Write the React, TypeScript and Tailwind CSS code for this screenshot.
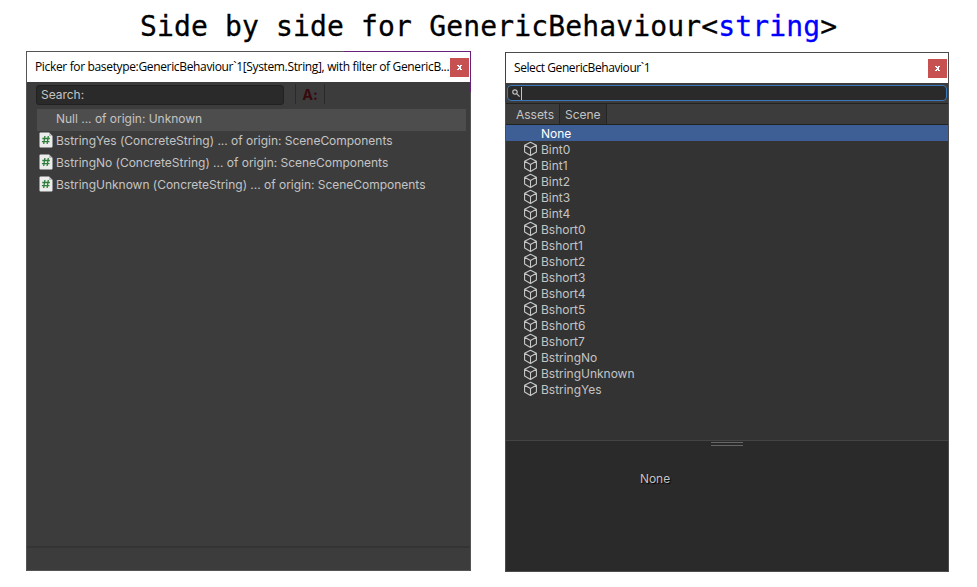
import React from "react";

const candidates = ["BstringYes", "BstringNo", "BstringUnknown"];
const sceneObjects = [
  "Bint0", "Bint1", "Bint2", "Bint3", "Bint4",
  "Bshort0", "Bshort1", "Bshort2", "Bshort3", "Bshort4", "Bshort5", "Bshort6", "Bshort7",
  "BstringNo", "BstringUnknown", "BstringYes",
];

function CloseButton() {
  return (
    <button className="flex h-[19px] w-[19px] shrink-0 items-center justify-center bg-[#c75050]" aria-label="Close">
      <svg width="5" height="5" viewBox="0 0 5 5" shapeRendering="crispEdges" fill="#fff">
        <path d="M0 0h2v1H0zM3 0h2v1H3zM1 1h3v1H1zM1.5 2h2v1h-2zM1 3h3v1H1zM0 4h2v1H0zM3 4h2v1H3z" />
      </svg>
    </button>
  );
}

function ScriptIcon() {
  return (
    <svg width="14" height="16" viewBox="0 0 14 16" className="shrink-0">
      <path d="M1.5.5H10L13.5 4v10.5q0 1-1 1h-11q-1 0-1-1v-13q0-1 1-1z" fill="#ececec" />
      <path d="M10 .5V4h3.500z" fill="#bdbdbd" />
      <path d="M5.900 4 4.700 12M9.300 4 8.100 12M3.300 6.500h7.500M2.900 9.600h7.500" stroke="#2f7d3b" strokeWidth="1.300" fill="none" />
    </svg>
  );
}

function CubeIcon() {
  return (
    <svg width="14" height="16" viewBox="0 0 14 16" fill="none" stroke="#c8c8c8" strokeWidth="1.100" strokeLinejoin="round" className="shrink-0">
      <path d="M6.500 1.300 12.400 4.300V11L6.500 14.400.600 11V4.300zM.600 4.300 6.500 7.600l5.900-3.300M6.500 7.600v6.800" />
    </svg>
  );
}

function PickerWindow() {
  return (
    <section className="relative mt-[51px] ml-[26px] flex h-[520px] w-[445px] shrink-0 flex-col border border-[#555] bg-[#3c3c3c]">
      <i className="absolute -top-px -right-px h-[41px] w-[127px] border-t border-r border-[#68217a]" />
      <header className="flex h-[30px] shrink-0 items-center justify-between bg-white pr-px pl-2">
        <span className="whitespace-nowrap font-['Open_Sans',sans-serif] text-[12px] tracking-[-0.345px] text-black">
          Picker for basetype:GenericBehaviour`1[System.String], with filter of GenericB...
        </span>
        <CloseButton />
      </header>
      <div className="flex h-[27px] shrink-0 pt-[3px] pl-[9px]">
        <div className="h-5 w-[248px] rounded-[3px] border border-[#212121] bg-[#2a2a2a] pl-1 leading-[18px]">Search:</div>
        <div className="-mt-px ml-[11px] h-5 w-[30px] border-x border-[#2a2a2a] text-center text-[14.500px] leading-[21px] font-bold text-[#370b0e]">A:</div>
      </div>
      <div className="mr-1 ml-[10px] flex h-[22px] shrink-0 bg-[#4d4d4d] pl-[19px] leading-[20px]">
        <span className="whitespace-pre">Null ... of origin: Unknown</span>
      </div>
      <ul className="grow">
        {candidates.map((name) => (
          <li key={name} className="flex h-[22px] gap-[3px] pt-px pl-3 leading-[18px]">
            <ScriptIcon />
            <span className="whitespace-pre">{name} (ConcreteString) ... of origin: SceneComponents</span>
          </li>
        ))}
      </ul>
      <footer className="h-6 shrink-0 border-t-2 border-[#343434]" />
    </section>
  );
}

function SelectWindow() {
  return (
    <section className="relative mt-[52px] ml-[34px] flex h-[520px] w-[444px] shrink-0 flex-col border border-[#4c4c4c] bg-[#333]">
      <i className="absolute -top-px -left-px h-[51px] w-px bg-[#68217a]" />
      <header className="flex h-[30px] shrink-0 items-center justify-between bg-white pr-px pl-2">
        <span className="font-['Open_Sans',sans-serif] text-[12px] tracking-[-0.420px] text-black">Select GenericBehaviour`1</span>
        <CloseButton />
      </header>
      <div className="h-[21px] shrink-0 border-b border-[#222] bg-[#3c3c3c] pt-[2px] pr-px pl-px">
        <div className="flex h-4 items-center rounded-[4px] border border-[#3a79bb] bg-[#2a2a2a] pl-1">
          <svg width="8" height="8" viewBox="0 0 8 8" fill="none" stroke="#c4c4c4" strokeWidth="1.200">
            <circle cx="3" cy="3" r="2.200" />
            <path d="m4.600 4.600 3 3" />
          </svg>
          <i className="ml-px h-[13px] w-px bg-[#c4c4c4]" />
        </div>
      </div>
      <nav className="flex h-[21px] shrink-0 border-b border-[#222] bg-[#3c3c3c] leading-[22px]">
        <span className="w-[53px] pl-[10px]">Assets</span>
        <span className="w-12 border-x border-[#252525] bg-[#333] pl-[5px]">Scene</span>
      </nav>
      <div className="h-4 shrink-0 bg-[#3e5f96] pl-[35px] leading-[18px] text-white">None</div>
      <ul className="grow">
        {sceneObjects.map((name) => (
          <li key={name} className="flex h-4 gap-[3px] pl-[18px] leading-[18px]">
            <CubeIcon />
            <span>{name}</span>
          </li>
        ))}
      </ul>
      <div className="flex h-[131px] shrink-0 flex-col items-center border-t border-[#444] bg-[#2a2a2a] pt-px">
        <div className="h-1 w-8 border-y border-[#666]" />
        <span className="mt-6 mr-[144px] leading-[18px] [text-shadow:1px_1px_1px_#000]">None</span>
      </div>
    </section>
  );
}

export default function App() {
  return (
    <main className="relative h-[587px] w-[977px] overflow-hidden bg-white font-[Inter,sans-serif] text-[12px] tracking-[-0.020px] text-[#c4c4c4] [font-feature-settings:'calt'_0]">
      <h1 className="absolute top-[9px] left-[140px] whitespace-pre font-['DejaVu_Sans_Mono',monospace] text-[28px] leading-9 tracking-[0.150px] text-black [-webkit-text-stroke:0.300px]">
        Side by side for GenericBehaviour&lt;<span className="text-[#0000ff]">string</span>&gt;
      </h1>
      <div className="flex">
        <PickerWindow />
        <SelectWindow />
      </div>
    </main>
  );
}
